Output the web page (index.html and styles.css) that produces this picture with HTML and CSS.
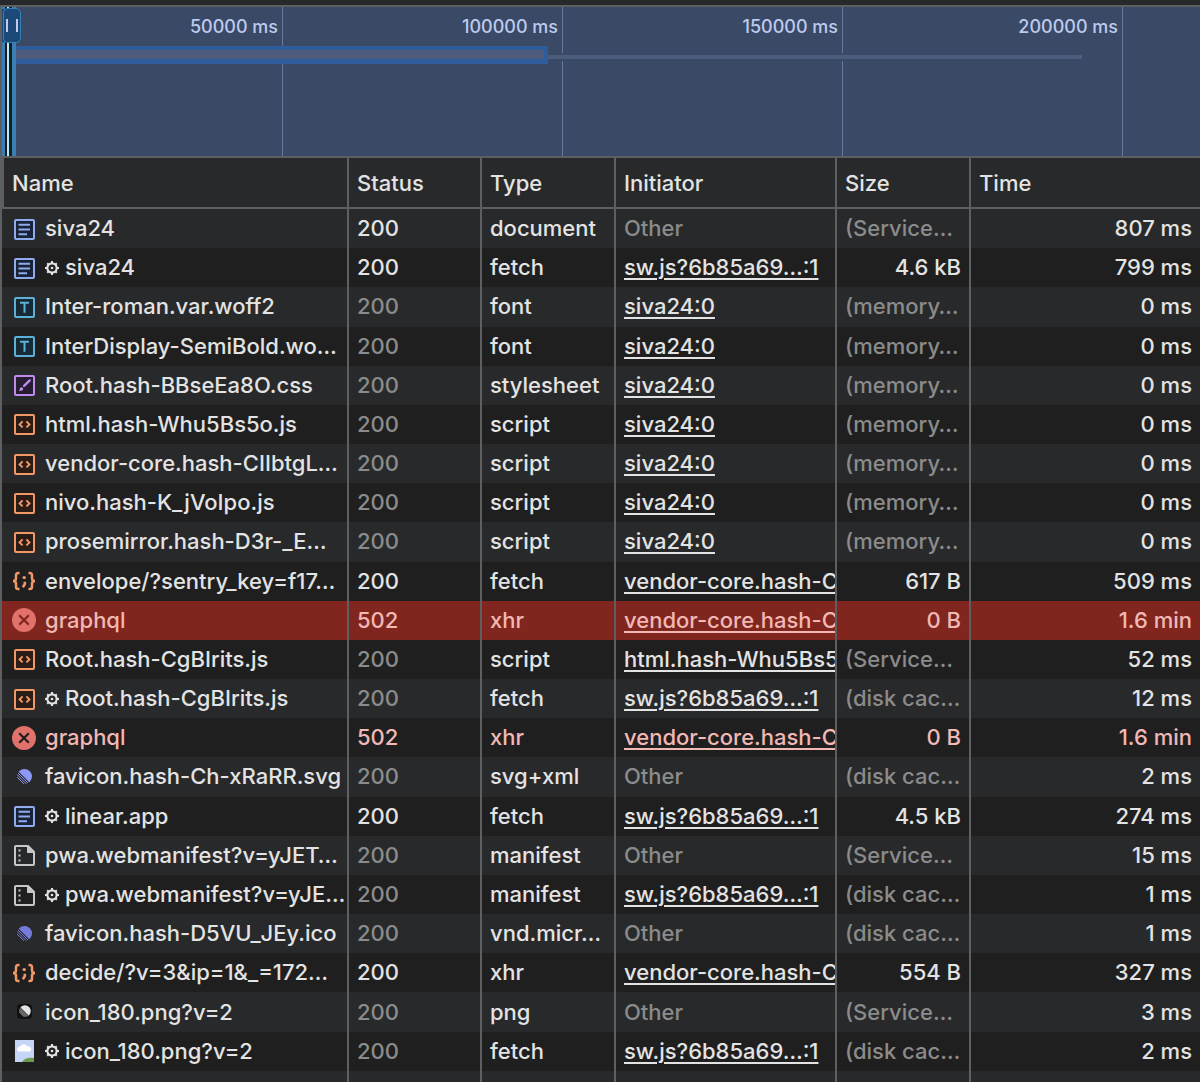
FILE: index.html
```html
<!DOCTYPE html>
<html lang="en">
<head>
  <meta charset="UTF-8" />
  <meta name="viewport" content="width=device-width, initial-scale=1.0" />
  <title>Network</title>
  <link rel="stylesheet" href="styles.css">
</head>
<body>
  <!-- Icon sprite -->
  <svg class="sprite" aria-hidden="true">
    <symbol id="doc" viewBox="0 0 24 24">
      <rect x="3" y="3" width="19" height="19" rx="1" fill="#182338" stroke="#8fabee" stroke-width="2"/>
      <path d="M6.5 7.8h11.5M6.5 12.5h11.5M6.5 17.2h8.5" stroke="#8fabee" stroke-width="2"/>
    </symbol>
    <symbol id="font" viewBox="0 0 24 24">
      <rect x="3" y="3" width="19" height="19" rx="1" fill="#152a35" stroke="#5db0d7" stroke-width="2"/>
      <path d="M8 7.8h9M12.5 7.8v10" fill="none" stroke="#5db0d7" stroke-width="2"/>
    </symbol>
    <symbol id="css" viewBox="0 0 24 24">
      <rect x="3" y="3" width="19" height="19" rx="1" fill="#271d33" stroke="#bf8cee" stroke-width="2"/>
      <path d="M17.7 7.4l-5.6 5.4" stroke="#bf8cee" stroke-width="2.4" stroke-linecap="round"/>
      <path d="M7 17.8c1-.6.4-3.6 2.4-3.6 2.8.1 2.8 4.3-2.4 3.6z" fill="#bf8cee"/>
    </symbol>
    <symbol id="script" viewBox="0 0 24 24">
      <rect x="3" y="3" width="19" height="19" rx="1" fill="#2b1d16" stroke="#f29766" stroke-width="2"/>
      <path d="M10.6 9.4l-3 3 3 3M14.4 9.4l3 3-3 3" fill="none" stroke="#f29766" stroke-width="2"/>
    </symbol>
    <symbol id="json" viewBox="0 0 24 24">
      <path d="M7.5 4H6.2C4.4 4 4 5 4 6.3v2.9c0 1.8-.8 2.8-3 2.8 2.2 0 3 1 3 2.8v2.9C4 19 4.4 20 6.2 20h1.3M16.5 4h1.3c1.8 0 2.2 1 2.2 2.3v2.9c0 1.8.8 2.8 3 2.8-2.2 0-3 1-3 2.8v2.900c0 1.3-.4 2.3-2.2 2.3h-1.3" fill="none" stroke="#f29766" stroke-width="2.5"/>
      <circle cx="12.2" cy="8.600" r="1.700" fill="#f29766"/>
      <path d="M12.8 12.800v2.400l-2 3" fill="none" stroke="#f29766" stroke-width="2.600"/>
    </symbol>
    <symbol id="error" viewBox="0 0 24 24">
      <circle cx="12" cy="12" r="12" fill="#e1716b"/>
      <path d="M7.2 7.2l9.6 9.6M16.8 7.2l-9.6 9.6" stroke="currentColor" stroke-width="2.2"/>
    </symbol>
    <symbol id="manifest" viewBox="0 0 24 24">
      <path d="M4 3h12l6 6v12q0 1-1 1H4q-1 0-1-1V4q0-1 1-1z" fill="none" stroke="#c7c7c7" stroke-width="2"/>
      <path d="M15 3h2l5 5v2h-7z" fill="#c7c7c7"/>
      <path d="M6.5 6.5h2v2h-2zM6.5 11.5h2v2h-2zM6.5 16.5h2v2h-2z" fill="#c7c7c7"/>
    </symbol>
    <symbol id="linear" viewBox="0 0 24 24">
      <clipPath id="ball"><circle cx="12.5" cy="11.5" r="7.5"/></clipPath>
      <g clip-path="url(#ball)">
        <path d="M3 2h20v20h-1L3 3z" fill="currentColor"/>
        <path d="M3 5l18 18M3 7.500l16 16M3 10l14 14" stroke="currentColor" stroke-width="1"/>
      </g>
    </symbol>
    <symbol id="picture" viewBox="0 0 24 24">
      <path d="M3 1h19v22H3z" fill="#c5d5f5"/>
      <path d="M6.5 12.5a2.5 2.5 0 0 1 1.5-4.7 4 4 0 0 1 7.3-.2 2.6 2.6 0 0 1 2.2 4.9z" fill="#fff"/>
      <path d="M10 23c2-3.5 7-5 12-4v4z" fill="#6b9a4c"/>
    </symbol>
    <symbol id="gear" viewBox="0 0 14 14">
      <circle cx="7" cy="7" r="4.7" fill="none" stroke="currentColor" stroke-width="2.2"/>
      <circle cx="7" cy="7" r="1.3" fill="currentColor"/>
      <path d="M7 0v2M7 12v2M0 7h2M12 7h2M2.2 2.2l1.4 1.4M10.4 10.4l1.4 1.4M11.8 2.2l-1.4 1.4M3.600 10.4l-1.4 1.4" stroke="currentColor" stroke-width="2"/>
    </symbol>
  </svg>

  <main class="panel">
    <div class="toolbar-edge"></div>

    <section class="overview" aria-label="Timeline overview">
      <div class="tick">50000 ms</div>
      <div class="tick">100000 ms</div>
      <div class="tick">150000 ms</div>
      <div class="tick">200000 ms</div>
      <div class="request-line"></div>
      <div class="request-band"></div>
      <div class="window"></div>
      <button class="handle handle-left" type="button" aria-label="Window start"></button>
      <button class="handle handle-right" type="button" aria-label="Window end"></button>
    </section>

    <table class="requests">
      <colgroup>
        <col class="col-name">
        <col class="col-status">
        <col class="col-type">
        <col class="col-initiator">
        <col class="col-size">
        <col class="col-time">
      </colgroup>
      <thead>
        <tr><th>Name</th><th>Status</th><th>Type</th><th>Initiator</th><th>Size</th><th>Time</th></tr>
      </thead>
      <tbody>
        <tr>
          <td><div class="name"><svg class="icon"><use href="#doc"/></svg>siva24</div></td>
          <td>200</td><td>document</td><td class="dim">Other</td><td class="dim">(Service…</td><td class="num">807 ms</td>
        </tr>
        <tr>
          <td><div class="name"><svg class="icon"><use href="#doc"/></svg><svg class="gear"><use href="#gear"/></svg>siva24</div></td>
          <td>200</td><td>fetch</td><td><a href="#">sw.js?6b85a69…:1</a></td><td class="num">4.6 kB</td><td class="num">799 ms</td>
        </tr>
        <tr>
          <td><div class="name"><svg class="icon"><use href="#font"/></svg>Inter-roman.var.woff2</div></td>
          <td class="dim">200</td><td>font</td><td><a href="#">siva24:0</a></td><td class="dim">(memory…</td><td class="num">0 ms</td>
        </tr>
        <tr>
          <td><div class="name"><svg class="icon"><use href="#font"/></svg>InterDisplay-SemiBold.wo…</div></td>
          <td class="dim">200</td><td>font</td><td><a href="#">siva24:0</a></td><td class="dim">(memory…</td><td class="num">0 ms</td>
        </tr>
        <tr>
          <td><div class="name"><svg class="icon"><use href="#css"/></svg>Root.hash-BBseEa8O.css</div></td>
          <td class="dim">200</td><td>stylesheet</td><td><a href="#">siva24:0</a></td><td class="dim">(memory…</td><td class="num">0 ms</td>
        </tr>
        <tr>
          <td><div class="name"><svg class="icon"><use href="#script"/></svg>html.hash-Whu5Bs5o.js</div></td>
          <td class="dim">200</td><td>script</td><td><a href="#">siva24:0</a></td><td class="dim">(memory…</td><td class="num">0 ms</td>
        </tr>
        <tr>
          <td><div class="name"><svg class="icon"><use href="#script"/></svg>vendor-core.hash-CIIbtgL…</div></td>
          <td class="dim">200</td><td>script</td><td><a href="#">siva24:0</a></td><td class="dim">(memory…</td><td class="num">0 ms</td>
        </tr>
        <tr>
          <td><div class="name"><svg class="icon"><use href="#script"/></svg>nivo.hash-K_jVoIpo.js</div></td>
          <td class="dim">200</td><td>script</td><td><a href="#">siva24:0</a></td><td class="dim">(memory…</td><td class="num">0 ms</td>
        </tr>
        <tr>
          <td><div class="name"><svg class="icon"><use href="#script"/></svg>prosemirror.hash-D3r-_E…</div></td>
          <td class="dim">200</td><td>script</td><td><a href="#">siva24:0</a></td><td class="dim">(memory…</td><td class="num">0 ms</td>
        </tr>
        <tr>
          <td><div class="name"><svg class="icon"><use href="#json"/></svg>envelope/?sentry_key=f17…</div></td>
          <td>200</td><td>fetch</td><td><a href="#">vendor-core.hash-C</a></td><td class="num">617 B</td><td class="num">509 ms</td>
        </tr>
        <tr class="failed selected">
          <td><div class="name"><svg class="icon"><use href="#error"/></svg>graphql</div></td>
          <td>502</td><td>xhr</td><td><a href="#">vendor-core.hash-C</a></td><td class="num">0 B</td><td class="num">1.6 min</td>
        </tr>
        <tr>
          <td><div class="name"><svg class="icon"><use href="#script"/></svg>Root.hash-CgBIrits.js</div></td>
          <td class="dim">200</td><td>script</td><td><a href="#">html.hash-Whu5Bs5</a></td><td class="dim">(Service…</td><td class="num">52 ms</td>
        </tr>
        <tr>
          <td><div class="name"><svg class="icon"><use href="#script"/></svg><svg class="gear"><use href="#gear"/></svg>Root.hash-CgBIrits.js</div></td>
          <td class="dim">200</td><td>fetch</td><td><a href="#">sw.js?6b85a69…:1</a></td><td class="dim">(disk cac…</td><td class="num">12 ms</td>
        </tr>
        <tr class="failed">
          <td><div class="name"><svg class="icon"><use href="#error"/></svg>graphql</div></td>
          <td>502</td><td>xhr</td><td><a href="#">vendor-core.hash-C</a></td><td class="num">0 B</td><td class="num">1.6 min</td>
        </tr>
        <tr>
          <td><div class="name"><svg class="icon indigo"><use href="#linear"/></svg>favicon.hash-Ch-xRaRR.svg</div></td>
          <td class="dim">200</td><td>svg+xml</td><td class="dim">Other</td><td class="dim">(disk cac…</td><td class="num">2 ms</td>
        </tr>
        <tr>
          <td><div class="name"><svg class="icon"><use href="#doc"/></svg><svg class="gear"><use href="#gear"/></svg>linear.app</div></td>
          <td>200</td><td>fetch</td><td><a href="#">sw.js?6b85a69…:1</a></td><td class="num">4.5 kB</td><td class="num">274 ms</td>
        </tr>
        <tr>
          <td><div class="name"><svg class="icon"><use href="#manifest"/></svg>pwa.webmanifest?v=yJET…</div></td>
          <td class="dim">200</td><td>manifest</td><td class="dim">Other</td><td class="dim">(Service…</td><td class="num">15 ms</td>
        </tr>
        <tr>
          <td><div class="name"><svg class="icon"><use href="#manifest"/></svg><svg class="gear"><use href="#gear"/></svg>pwa.webmanifest?v=yJE…</div></td>
          <td class="dim">200</td><td>manifest</td><td><a href="#">sw.js?6b85a69…:1</a></td><td class="dim">(disk cac…</td><td class="num">1 ms</td>
        </tr>
        <tr>
          <td><div class="name"><svg class="icon violet"><use href="#linear"/></svg>favicon.hash-D5VU_JEy.ico</div></td>
          <td class="dim">200</td><td>vnd.micr…</td><td class="dim">Other</td><td class="dim">(disk cac…</td><td class="num">1 ms</td>
        </tr>
        <tr>
          <td><div class="name"><svg class="icon"><use href="#json"/></svg>decide/?v=3&amp;ip=1&amp;_=172…</div></td>
          <td>200</td><td>xhr</td><td><a href="#">vendor-core.hash-C</a></td><td class="num">554 B</td><td class="num">327 ms</td>
        </tr>
        <tr>
          <td><div class="name"><svg class="icon app-icon" viewBox="0 0 24 24"><rect x="5" y="4" width="15" height="15" rx="4"/><use href="#linear" x="3" y="2" width="19" height="19"/></svg>icon_180.png?v=2</div></td>
          <td class="dim">200</td><td>png</td><td class="dim">Other</td><td class="dim">(Service…</td><td class="num">3 ms</td>
        </tr>
        <tr>
          <td><div class="name"><svg class="icon"><use href="#picture"/></svg><svg class="gear"><use href="#gear"/></svg>icon_180.png?v=2</div></td>
          <td class="dim">200</td><td>fetch</td><td><a href="#">sw.js?6b85a69…:1</a></td><td class="dim">(disk cac…</td><td class="num">2 ms</td>
        </tr>
        <tr class="filler"><td></td><td></td><td></td><td></td><td></td><td></td></tr>
      </tbody>
    </table>
  </main>
</body>
</html>
```
FILE: styles.css
```css
* {
  box-sizing: border-box;
}

body {
  margin: 0;
  background-color: #28292a;
  color: #e3e3e3;
  font-family: Inter, "Liberation Sans", sans-serif;
  font-size: 22px;
  font-weight: 450;
}

.sprite {
  position: absolute;
  width: 0;
  height: 0;
}

.panel {
  display: flex;
  flex-direction: column;
  min-height: 100vh;
}

.toolbar-edge {
  height: 7px;
  border-bottom: 2px solid #5e5f60;
}

/* Timeline overview */
.overview {
  position: relative;
  display: flex;
  height: 151px;
  padding-left: 1px;
  border-left: 2px solid #5e5f60;
  border-bottom: 2px solid #5e5f60;
  background-color: #3a4966;
  overflow: hidden;
}

.tick {
  flex: 0 0 280px;
  padding: 8px 4px 0 0;
  border-right: 1px solid #67799c;
  color: #bccbee;
  font-size: 18px;
  line-height: 24px;
  text-align: right;
}

.request-line {
  position: absolute;
  top: 46px;
  left: 545px;
  width: 535px;
  height: 8px;
  border: solid #3a4966;
  border-width: 2px 0;
  background-color: #4c5c7c;
}

.request-band {
  position: absolute;
  top: 39px;
  left: 0;
  width: 546px;
  height: 18px;
  border: solid #2f5c9a;
  border-width: 4px 4px 5px 0;
  background-color: #4e5b7c;
}

.window {
  position: absolute;
  top: 0;
  bottom: 0;
  left: 0;
  width: 14px;
  border: solid #3a7fb3;
  border-width: 0 4px 0 3px;
  background: linear-gradient(to right, #1b1d20 2px, #b9edfa 2px, #b9edfa 4px, #1b1d20 4px);
}

.handle {
  position: absolute;
  top: 1px;
  width: 18px;
  height: 35px;
  padding: 0;
  border: 1px solid #3382b8;
  border-radius: 5px;
  background: #1d4978;
  cursor: ew-resize;
}

.handle::before {
  content: "";
  display: block;
  width: 8px;
  height: 13px;
  margin: 0 auto;
  border: solid #bccbee;
  border-width: 0 2px;
}

.handle-left {
  left: -12px;
}

.handle-right {
  left: 1px;
}

/* Request table */
.requests {
  flex: 1;
  width: 100%;
  table-layout: fixed;
  border-collapse: separate;
  border-spacing: 0;
  border-left: 2px solid #5e5f60;
}

.col-name {
  width: 347px;
}

.col-status {
  width: 133px;
}

.col-type,
.col-size {
  width: 134px;
}

.col-initiator {
  width: 221px;
}

.requests th,
.requests td {
  padding: 0 8px;
  border-right: 2px solid #5e5f60;
  font-weight: inherit;
  text-align: left;
  white-space: nowrap;
  overflow: hidden;
}

.requests th:last-child,
.requests td:last-child {
  border-right: none;
}

.requests th {
  height: 51px;
  border-bottom: 2px solid #5e5f60;
}

.requests th:first-child {
  border-left: 2px solid #5e5f60;
}

.requests td {
  line-height: 39px;
}

.requests td:nth-child(4) {
  padding-right: 0;
}

.requests td:first-child {
  padding: 0 0 0 10px;
}

tbody tr:nth-child(even) {
  background-color: #1f1f1f;
}

.requests .dim {
  color: #8b8b8b;
}

.requests .num {
  text-align: right;
}

.requests a {
  color: inherit;
  text-decoration: underline;
  text-decoration-thickness: 2px;
  text-underline-offset: 3px;
}

.requests .filler td {
  height: 11px;
  line-height: 0;
}

.name {
  display: flex;
  align-items: center;
}

.icon {
  flex: none;
  width: 24px;
  height: 24px;
  margin-right: 9px;
}

.gear {
  flex: none;
  width: 14px;
  height: 14px;
  margin-right: 6px;
}

.indigo {
  color: #8d97f5;
}

.violet {
  color: #757adb;
}

.app-icon {
  color: #e4e4e4;
  fill: #111;
}

/* Failed requests */
tr.failed {
  color: #f1b8b4;
}

tr.failed .icon {
  color: #1f1f1f;
}

tr.failed.selected {
  background-color: #80261f;
}

tr.failed.selected .icon {
  color: #80261f;
}
```
